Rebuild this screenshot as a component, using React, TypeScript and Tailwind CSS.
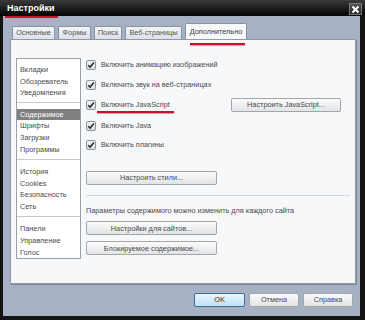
import React from "react";

const font = { fontFamily: '"Liberation Sans", Arial, sans-serif' };

function Check({ label, marked }: { label: string; marked?: boolean }) {
  return (
    <div className="flex items-center h-[12px]">
      <span className="w-[10px] h-[10px] rounded-[2px] border border-[#8f959c] bg-gradient-to-b from-[#f4f4f4] to-[#d9dcdf] flex items-center justify-center">
        <svg width="8" height="8" viewBox="0 0 8 8">
          <path d="M1.2 4.2 L3.1 6.1 L6.9 1.6" fill="none" stroke="#2b2b2b" strokeWidth="1.5" />
        </svg>
      </span>
      <span className="relative ml-[5px] text-[7.3px] text-[#4a4a4a] leading-none">
        {label}
        {marked && (
          <span className="absolute left-[-4px] right-[-4px] top-[10px] h-[1.5px] bg-[#c8102e] shadow-[0_1px_1px_rgba(120,0,0,0.35)]" />
        )}
      </span>
    </div>
  );
}

function Btn({ children, w, def }: { children: React.ReactNode; w: string; def?: boolean }) {
  return (
    <div
      className={`${w} h-[14px] flex items-center justify-center rounded-[2px] border text-[7.3px] leading-none ${
        def
          ? "border-[#3d6d99] bg-gradient-to-b from-[#eaf6fd] to-[#bfe0f4] text-[#333]"
          : "border-[#a2a6ab] bg-gradient-to-b from-[#fbfbfb] to-[#e3e4e6] text-[#4a4a4a]"
      }`}
    >
      {children}
    </div>
  );
}

function Item({ text, sel }: { text: string; sel?: boolean }) {
  return (
    <div
      className={`h-[12px] flex items-center pl-[3px] text-[7.3px] leading-none ${
        sel ? "bg-[#808080] text-white" : "text-[#4a4a4a]"
      }`}
    >
      {text}
    </div>
  );
}

export default function App() {
  const tabs = ["Основные", "Формы", "Поиск", "Веб-страницы"];
  const widths = ["w-[43px]", "w-[33px]", "w-[28px]", "w-[57px]"];
  return (
    <div style={font} className="w-[365px] h-[320px] bg-[#141414] flex flex-col overflow-hidden">
      {/* title bar */}
      <div className="h-[16px] shrink-0 flex items-center bg-gradient-to-b from-[#3b3b3b] to-[#050505] pl-[7px] pr-[3px]">
        <span className="relative text-white font-bold text-[9px] leading-none">
          Настройки
          <span className="absolute left-[-2px] right-[-4px] top-[12px] h-[2px] bg-[#d0102a]" />
        </span>
        <div className="ml-auto mt-[2px] w-[13px] h-[12px] border border-[#777] bg-gradient-to-b from-[#555] to-[#2a2a2a] flex items-center justify-center">
          <svg width="9" height="9" viewBox="0 0 9 9">
            <path d="M1.5 1.5 L7.5 7.5 M7.5 1.5 L1.5 7.5" stroke="#fff" strokeWidth="2" />
          </svg>
        </div>
      </div>

      {/* body */}
      <div className="flex-1 ml-[3px] mr-[5px] mb-[4px] bg-[#a6b1c3] flex flex-col pt-[7px]">
        {/* tabs */}
        <div className="flex items-end h-[16px] pl-[9px] gap-[3px]">
          {tabs.map((t, i) => (
            <div
              key={t}
              className={`${widths[i]} h-[13px] flex items-center justify-center rounded-t-[2px] border border-b-0 border-[#8893a4] bg-gradient-to-b from-[#f2f4f7] to-[#dde1e7] text-[7.3px] text-[#555] leading-none`}
            >
              {t}
            </div>
          ))}
          <div className="relative w-[62px] h-[16px] flex items-center justify-center rounded-t-[2px] border border-b-0 border-[#8893a4] bg-[#f7f8fa] text-[7.3px] text-[#3a3a3a] leading-none">
            Дополнительно
            <span className="absolute left-[4px] right-[1px] top-[19px] h-[1.5px] bg-[#c8102e] shadow-[0_1px_1px_rgba(120,0,0,0.35)]" />
          </div>
        </div>

        {/* panel */}
        <div className="ml-[7px] mr-[4px] h-[245px] bg-[#f7f8fa] border border-[#8e99aa] flex pt-[18px] pl-[5px] shadow-[1px_1px_0_#7d889a]">
          <div className="w-[65px] h-[201px] border border-[#9aa0a8] bg-white flex flex-col pt-[5px]">
            <Item text="Вкладки" />
            <Item text="Обозреватель" />
            <Item text="Уведомления" />
            <div className="h-px bg-[#c8ccd2] mt-[3px] mb-[6px]" />
            <Item text="Содержимое" sel />
            <Item text="Шрифты" />
            <Item text="Загрузки" />
            <Item text="Программы" />
            <div className="h-px bg-[#c8ccd2] mt-[4px] mb-[6px]" />
            <Item text="История" />
            <Item text="Cookies" />
            <Item text="Безопасность" />
            <Item text="Сеть" />
            <div className="h-px bg-[#c8ccd2] mt-[4px] mb-[6px]" />
            <Item text="Панели" />
            <Item text="Управление" />
            <Item text="Голос" />
          </div>

          <div className="flex-1 ml-[5px] mr-[5px] flex flex-col">
            <div className="flex flex-col gap-[7.5px] pt-[1px]">
              <Check label="Включить анимацию изображений" />
              <Check label="Включить звук на веб-страницах" />
              <div className="flex items-center">
                <div className="w-[145px]">
                  <Check label="Включить JavaScript" marked />
                </div>
                <Btn w="w-[110px]">Настроить JavaScript...</Btn>
              </div>
              <Check label="Включить Java" />
              <Check label="Включить плагины" />
            </div>
            <div className="mt-[20px]">
              <Btn w="w-[131px]">Настроить стили...</Btn>
            </div>
            <div className="h-px bg-[#d3d7dc] mt-[10px]" />
            <div className="mt-[11px] text-[7.3px] text-[#4a4a4a] leading-none">
              Параметры содержимого можно изменить для каждого сайта
            </div>
            <div className="mt-[7px] flex flex-col gap-[6px]">
              <Btn w="w-[131px]">Настройки для сайтов...</Btn>
              <Btn w="w-[131px]">Блокируемое содержимое...</Btn>
            </div>
          </div>
        </div>

        {/* bottom buttons */}
        <div className="flex justify-end gap-[4px] mt-[9px] mr-[7px]">
          <Btn w="w-[51px]" def>OK</Btn>
          <Btn w="w-[50px]">Отмена</Btn>
          <Btn w="w-[50px]">Справка</Btn>
        </div>
      </div>
    </div>
  );
}
